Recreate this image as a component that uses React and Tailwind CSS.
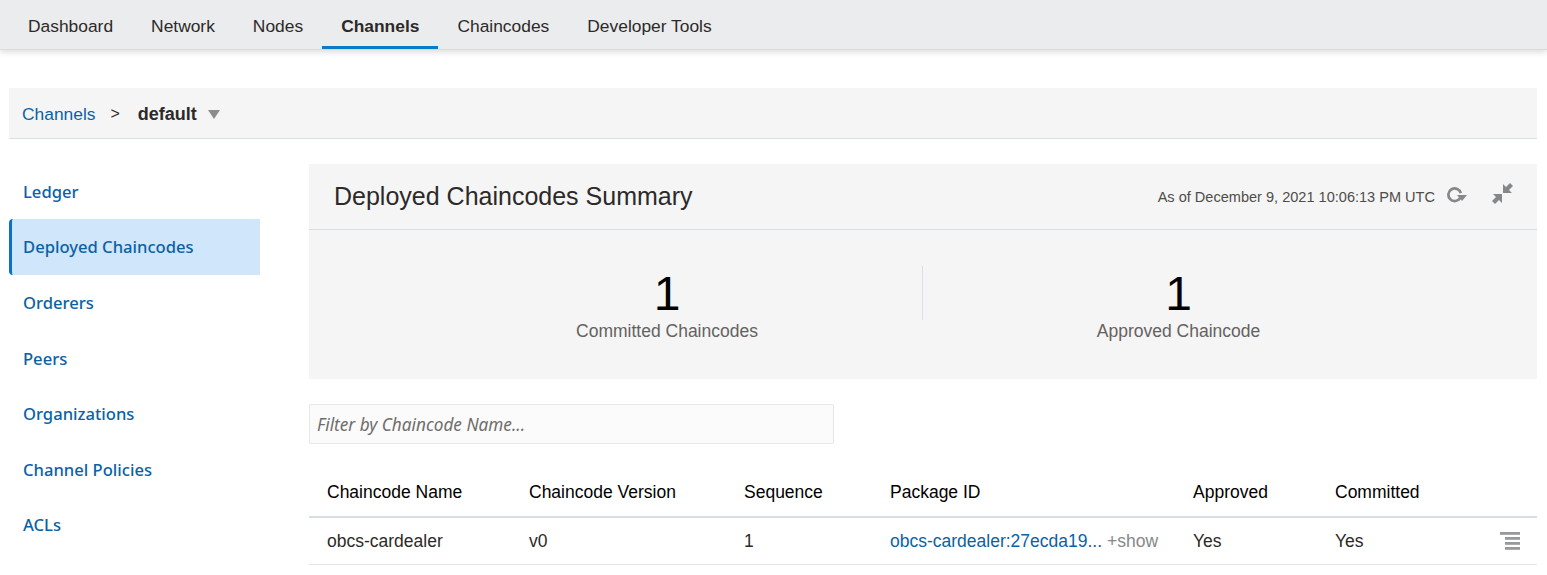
const navItems = ['Dashboard', 'Network', 'Nodes', 'Channels', 'Chaincodes', 'Developer Tools']
const sideItems = ['Ledger', 'Deployed Chaincodes', 'Orderers', 'Peers', 'Organizations', 'Channel Policies', 'ACLs']
const headers = ['Chaincode Name', 'Chaincode Version', 'Sequence', 'Package ID', 'Approved', 'Committed']

function RefreshIcon() {
  return (
    <svg width="21" height="17" viewBox="0 0 21 17" fill="none">
      <path d="M13.1 11A6.3 6.3 0 1 1 13.8 6.2" stroke="#85888b" strokeWidth="2.7" />
      <path d="M10 8h10l-5 6z" fill="#85888b" />
    </svg>
  )
}

function CollapseIcon() {
  return (
    <svg width="21" height="21" viewBox="0 0 21 21" fill="#85888b">
      <path d="M11 1v9h9l-3-3 4-4-3-3-4 4z" />
      <path d="M10 11H1l3 3-4 4 3 3 4-4 3 3z" />
    </svg>
  )
}

function RowMenuIcon() {
  return (
    <svg width="20" height="18" viewBox="0 0 20 18" fill="#97999c">
      <rect x="0" y="0" width="20" height="2.8" />
      <rect x="5" y="5" width="15" height="2.8" />
      <rect x="5" y="10" width="15" height="2.8" />
      <rect x="5" y="15" width="15" height="2.8" />
    </svg>
  )
}

function Stat({ value, label, divided }) {
  return (
    <div className={divided ? 'flex h-[54px] w-[511px] flex-col items-center border-r border-[#d6dfe6]' : 'flex h-[54px] w-[511px] flex-col items-center'}>
      <span className="mt-[1px] text-[48px] leading-[54px] text-black">{value}</span>
      <span className="text-[17.5px] leading-[20px] text-[#646260]">{label}</span>
    </div>
  )
}

export default function App() {
  return (
    <div className="min-h-[575px] overflow-hidden bg-white font-['Liberation_Sans',Arial,sans-serif] text-[#2c2a28]">
      {/* top nav */}
      <div className="flex h-[50px] border-b border-[#d8dcdf] bg-[#ebecee] pl-[9px] shadow-[0_2px_6px_rgba(0,0,0,0.15)]">
        {navItems.map((item) => (
          <div
            key={item}
            className={
              item === 'Channels'
                ? 'flex h-[49px] items-center border-b-[3px] border-[#0a7bc9] px-[19px] pt-[6px] text-[17.4px] font-bold'
                : 'flex h-[49px] items-center px-[19px] pt-[3px] text-[17.4px]'
            }
          >
            {item}
          </div>
        ))}
      </div>

      {/* breadcrumb */}
      <div className="ml-[9px] mr-[10px] mt-[38px] flex h-[51px] items-center border-b border-[#d6dfe6] bg-[#f5f5f5] pl-[13px] pt-[2px] text-[17.4px]">
        <span className="text-[#0a62a6]">Channels</span>
        <span className="ml-[15px] text-[16px]">&gt;</span>
        <span className="ml-[18px] text-[18px] font-bold">default</span>
        <span className="ml-[11px] h-0 w-0 border-x-[6.5px] border-t-[9px] border-x-transparent border-t-[#8a8d90]" />
      </div>

      <div className="mt-[25px] flex">
        {/* side menu */}
        <div className="ml-[9px] w-[251px] font-['Noto_Sans',sans-serif] text-[16.6px] font-medium text-[#0a62a6]">
          {sideItems.map((item) =>
            item === 'Deployed Chaincodes' ? (
              <div key={item} className="flex h-[56px] items-center rounded-l-sm border-l-[3px] border-[#0a72c4] bg-[#d0e6fa] pl-[11px]">
                {item}
              </div>
            ) : item === 'Ledger' ? (
              <div key={item} className="flex h-[55px] items-center pl-[14px] pt-[1px]">
                {item}
              </div>
            ) : (
              <div key={item} className="flex h-[55.5px] items-center pl-[14px] pt-[2px]">
                {item}
              </div>
            ),
          )}
        </div>

        <div className="ml-[49px] mr-[10px] flex-1">
          {/* summary */}
          <div className="h-[215px] bg-[#f5f5f5]">
            <div className="flex h-[66px] items-center justify-between border-b border-[#d6dfe6] pl-[25px] pr-[24px]">
              <span className="text-[25px]">Deployed Chaincodes Summary</span>
              <div className="flex items-center">
                <span className="pt-[2px] text-[14.55px] text-[#4f4d4b]">As of December 9, 2021 10:06:13 PM UTC</span>
                <span className="mb-[3px] ml-[12px]"><RefreshIcon /></span>
                <span className="mb-[6px] ml-[24px]"><CollapseIcon /></span>
              </div>
            </div>
            <div className="flex justify-center pt-[36px]">
              <Stat value="1" label="Committed Chaincodes" divided />
              <Stat value="1" label="Approved Chaincode" />
            </div>
          </div>

          {/* filter */}
          <input
            readOnly
            placeholder="Filter by Chaincode Name..."
            className="mt-[25px] block h-[40px] w-[525px] rounded-[2px] border border-[#e4e6e8] bg-[#fbfbfb] px-[7px] font-['Noto_Sans',sans-serif] text-[17.2px] italic placeholder:text-[#6f6d6b]"
          />

          {/* table */}
          <div className="mt-[28px] grid grid-cols-[202px_215px_146px_303px_142px_1fr] text-[17.5px]">
            {headers.map((h) => (
              <div key={h} className="flex h-[46px] items-center border-b-2 border-[#d6dfe6] pb-[3px] pl-[18px] text-black">
                {h}
              </div>
            ))}
            <div className="flex h-[47px] items-center border-b border-[#e2e4e6] pl-[18px]">obcs-cardealer</div>
            <div className="flex h-[47px] items-center border-b border-[#e2e4e6] pl-[18px]">v0</div>
            <div className="flex h-[47px] items-center border-b border-[#e2e4e6] pl-[18px]">1</div>
            <div className="flex h-[47px] items-center border-b border-[#e2e4e6] pl-[18px]">
              <span className="text-[#0a62a6]">obcs-cardealer:27ecda19...</span>
              <span className="ml-[5px] text-[#86888a]">+show</span>
            </div>
            <div className="flex h-[47px] items-center border-b border-[#e2e4e6] pl-[18px]">Yes</div>
            <div className="flex h-[47px] items-center border-b border-[#e2e4e6] pl-[18px]">
              Yes
              <span className="ml-auto mr-[17px]"><RowMenuIcon /></span>
            </div>
          </div>
        </div>
      </div>
    </div>
  )
}
